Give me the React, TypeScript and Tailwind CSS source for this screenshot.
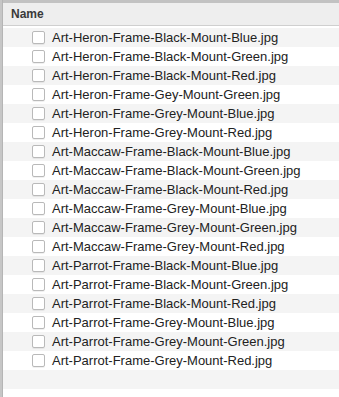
import React from "react";

const files = [
  "Art-Heron-Frame-Black-Mount-Blue.jpg",
  "Art-Heron-Frame-Black-Mount-Green.jpg",
  "Art-Heron-Frame-Black-Mount-Red.jpg",
  "Art-Heron-Frame-Gey-Mount-Green.jpg",
  "Art-Heron-Frame-Grey-Mount-Blue.jpg",
  "Art-Heron-Frame-Grey-Mount-Red.jpg",
  "Art-Maccaw-Frame-Black-Mount-Blue.jpg",
  "Art-Maccaw-Frame-Black-Mount-Green.jpg",
  "Art-Maccaw-Frame-Black-Mount-Red.jpg",
  "Art-Maccaw-Frame-Grey-Mount-Blue.jpg",
  "Art-Maccaw-Frame-Grey-Mount-Green.jpg",
  "Art-Maccaw-Frame-Grey-Mount-Red.jpg",
  "Art-Parrot-Frame-Black-Mount-Blue.jpg",
  "Art-Parrot-Frame-Black-Mount-Green.jpg",
  "Art-Parrot-Frame-Black-Mount-Red.jpg",
  "Art-Parrot-Frame-Grey-Mount-Blue.jpg",
  "Art-Parrot-Frame-Grey-Mount-Green.jpg",
  "Art-Parrot-Frame-Grey-Mount-Red.jpg",
];

export default function App() {
  return (
    <div
      className="w-[339px] h-[397px] overflow-hidden flex bg-white"
      style={{ fontFamily: '"Liberation Sans", Arial, sans-serif' }}
    >
      <div className="w-[3px] bg-[#c6c6c6] border-r border-[#b5b5b5] shrink-0" />
      <div className="flex-1 flex flex-col">
        <div className="h-[3px] bg-[#c2c2c2]" />
        <div className="h-[23px] bg-[#eeeeee] border-b border-[#cfcfcf] flex items-center pl-[8px] text-[12px] font-semibold text-[#3a3a3a]">
          Name
        </div>
        <div className="h-[2px] bg-white" />
        {files.map((f, i) => (
          <div
            key={f}
            className={`h-[19px] flex items-center ${i % 2 === 0 ? "bg-[#f4f4f4]" : "bg-white"}`}
          >
            <div className="ml-[29px] w-[13px] h-[13px] rounded-[2px] border border-[#b9b9b9] bg-white shadow-[0_1px_0_rgba(0,0,0,0.06)] shrink-0" />
            <span className="ml-[7px] text-[13px] text-[#222222] whitespace-nowrap">{f}</span>
          </div>
        ))}
        <div className="h-[19px] bg-[#f4f4f4]" />
        <div className="flex-1 bg-white" />
      </div>
    </div>
  );
}
